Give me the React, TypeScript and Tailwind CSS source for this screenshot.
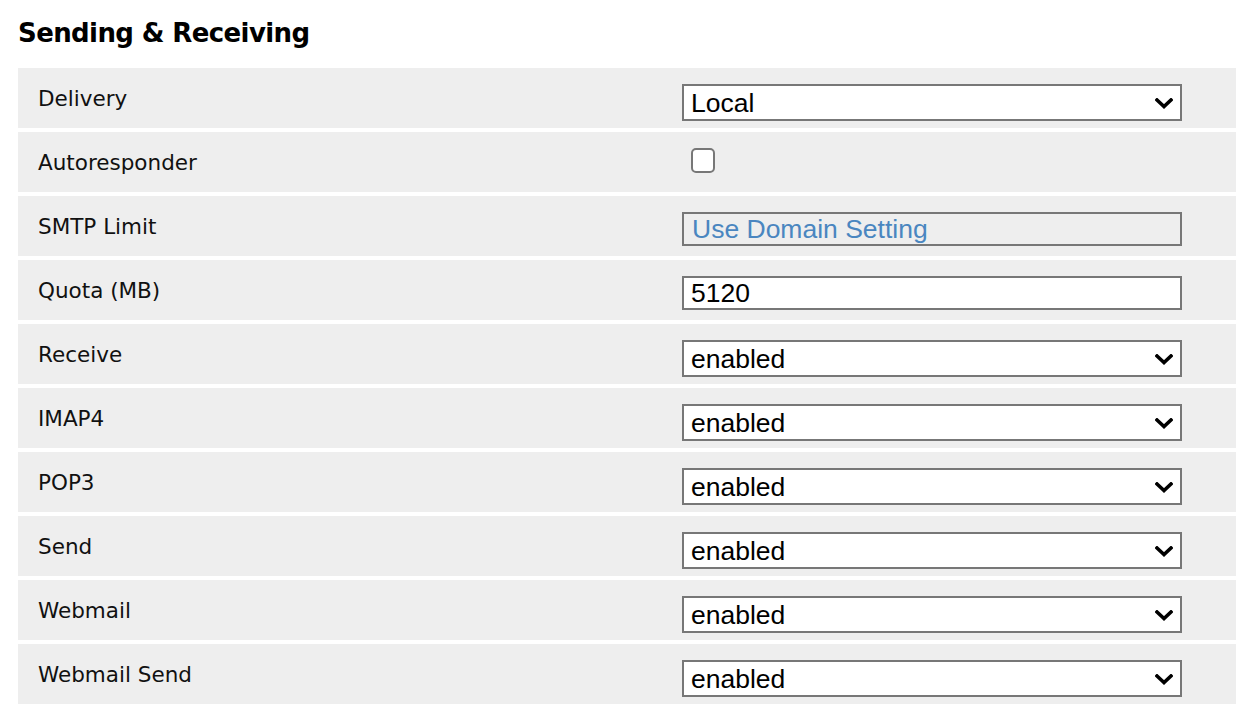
import React from "react";

function Chevron() {
  return (
    <svg width="18" height="11" viewBox="0 0 18 11" className="shrink-0">
      <polyline points="2,2 9,8.5 16,2" fill="none" stroke="#000" strokeWidth="3.6" strokeLinecap="square" strokeLinejoin="miter" />
    </svg>
  );
}

function Select({ value }: { value: string }) {
  return (
    <div className="w-[500px] h-[37px] border-2 border-[#777777] bg-white flex items-center justify-between pl-[7px] pr-[7px] pt-[1px] text-[26.5px] leading-[29px] text-black font-['Liberation_Sans',Arial,sans-serif]">
      <span>{value}</span>
      <Chevron />
    </div>
  );
}

function TextInput({ value, muted }: { value: string; muted?: boolean }) {
  return (
    <div
      className={
        muted
          ? "w-[500px] h-[34px] border-2 border-[#777777] bg-[#eeeeee] flex items-center pl-[8px] text-[26.5px] leading-[29px] text-[#4a86c0] font-['Liberation_Sans',Arial,sans-serif]"
          : "w-[500px] h-[34px] border-2 border-[#777777] bg-white flex items-center pl-[7px] pt-[1px] text-[26.5px] leading-[29px] text-black font-['Liberation_Sans',Arial,sans-serif]"
      }
    >
      {value}
    </div>
  );
}

function Checkbox() {
  return <div className="ml-[9px] w-[24px] h-[25px] border-2 border-[#777777] rounded-[5px] bg-white" />;
}

type Row = { label: string; kind: "select" | "check" | "muted" | "text"; value?: string };

const rows: Row[] = [
  { label: "Delivery", kind: "select", value: "Local" },
  { label: "Autoresponder", kind: "check" },
  { label: "SMTP Limit", kind: "muted", value: "Use Domain Setting" },
  { label: "Quota (MB)", kind: "text", value: "5120" },
  { label: "Receive", kind: "select", value: "enabled" },
  { label: "IMAP4", kind: "select", value: "enabled" },
  { label: "POP3", kind: "select", value: "enabled" },
  { label: "Send", kind: "select", value: "enabled" },
  { label: "Webmail", kind: "select", value: "enabled" },
  { label: "Webmail Send", kind: "select", value: "enabled" },
];

export default function App() {
  return (
    <div className="w-[1236px] h-[721px] overflow-hidden bg-white pl-[18px] font-['DejaVu_Sans',sans-serif]">
      <h2 className="mt-[18px] mb-[20px] text-[26px] leading-[30px] font-bold text-black tracking-[-0.6px]">
        Sending &amp; Receiving
      </h2>
      <div className="flex flex-col gap-[4px]">
        {rows.map((r) => (
          <div key={r.label} className="h-[60px] bg-[#eeeeee] flex">
            <div className="w-[664px] pl-[20px] flex items-center text-[21.5px] leading-[25px] text-[#111111]">
              {r.label}
            </div>
            <div className="pt-[16px]">
              {r.kind === "select" && <Select value={r.value!} />}
              {r.kind === "check" && <Checkbox />}
              {r.kind === "muted" && <TextInput value={r.value!} muted />}
              {r.kind === "text" && <TextInput value={r.value!} />}
            </div>
          </div>
        ))}
      </div>
    </div>
  );
}
